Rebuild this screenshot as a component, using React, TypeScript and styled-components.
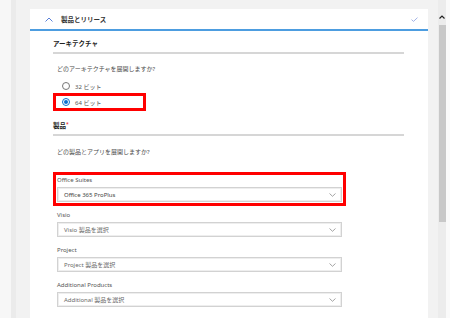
import styled, { createGlobalStyle } from "styled-components";

const GlobalStyle = createGlobalStyle`
  html, body {
    margin: 0;
    padding: 0;
    background: #f2f2f2;
    overflow: hidden;
  }
  body {
    font-family: "Noto Sans", "Noto Sans CJK JP", sans-serif;
    color: #333;
  }
`;

const fields = [
  { label: "Office Suites", value: "Office 365 ProPlus", selected: true, marked: true },
  { label: "Visio", value: "Visio 製品を選択", selected: false, marked: false },
  { label: "Project", value: "Project 製品を選択", selected: false, marked: false },
  { label: "Additional Products", value: "Additional 製品を選択", selected: false, marked: false },
];

function ChevronDown() {
  return (
    <svg width="7" height="4" viewBox="0 0 7 4">
      <path d="M0.5 0.5 L3.5 3.3 L6.5 0.5" fill="none" stroke="#9a9a9a" strokeWidth="0.9" />
    </svg>
  );
}

function App() {
  return (
    <>
      <GlobalStyle />
      <Page>
        <LeftRail />
        <Main>
          <Card>
            <Header>
              <svg width="8" height="5" viewBox="0 0 8 5">
                <path d="M0.5 4.5 L4 1 L7.5 4.5" fill="none" stroke="#5a80d8" strokeWidth="1" />
              </svg>
              <HeaderTitle>製品とリリース</HeaderTitle>
              <svg width="7" height="5" viewBox="0 0 7 5">
                <path d="M0.5 2.6 L2.5 4.4 L6.5 0.6" fill="none" stroke="#a3b3e6" strokeWidth="1" />
              </svg>
            </Header>
            <Body>
              <SectionTitle $top={8}>アーキテクチャ</SectionTitle>
              <Question $top={10}>どのアーキテクチャを展開しますか?</Question>
              <RadioGroup>
                <RadioRow>
                  <RadioCircle $checked={false} />
                  <span>32 ビット</span>
                </RadioRow>
                <RadioRow $marked>
                  <RadioCircle $checked />
                  <span>64 ビット</span>
                </RadioRow>
              </RadioGroup>
              <SectionTitle $top={13}>
                製品<Required>*</Required>
              </SectionTitle>
              <Question $top={11}>どの製品とアプリを展開しますか?</Question>
              <Fields>
                {fields.map((f) => (
                  <Field key={f.label} $marked={f.marked}>
                    <FieldLabel>{f.label}</FieldLabel>
                    <Select $selected={f.selected}>
                      <span>{f.value}</span>
                      <ChevronDown />
                    </Select>
                  </Field>
                ))}
              </Fields>
            </Body>
          </Card>
        </Main>
        <ScrollArea>
          <Gutter />
          <Track>
            <Arrow>
              <svg width="6" height="4" viewBox="0 0 6 4">
                <path d="M0.5 3.5 L3 1 L5.5 3.5" fill="none" stroke="#222" strokeWidth="1.2" />
              </svg>
            </Arrow>
            <Thumb />
          </Track>
          <Edge />
        </ScrollArea>
      </Page>
    </>
  );
}

export default App;

const Page = styled.div`
  display: flex;
  width: 450px;
  height: 318px;
`;

const LeftRail = styled.div`
  width: 11px;
  background: #f7f7f7;
  border-right: 5px solid #ebebeb;
`;

const Main = styled.div`
  width: 412px;
  padding: 9px 0 0 14px;
  box-sizing: border-box;
`;

const Card = styled.div`
  width: 398px;
  height: 100%;
  background: #fff;
  display: flex;
  flex-direction: column;
`;

const Header = styled.div`
  height: 20px;
  border-bottom: 2px solid #4d9de0;
  display: flex;
  align-items: center;
  padding: 0 10px 0 15px;
`;

const HeaderTitle = styled.div`
  flex: 1;
  margin-left: 8px;
  font-size: 6.5px;
  font-weight: bold;
  color: #333;
`;

const Body = styled.div`
  padding: 0 24px 0 23px;
  display: flex;
  flex-direction: column;
`;

const SectionTitle = styled.div<{ $top: number }>`
  margin-top: ${(p) => p.$top}px;
  font-size: 6.5px;
  line-height: 10px;
  font-weight: bold;
  color: #222;
  padding-bottom: 3px;
  border-bottom: 2px solid #d6d6d6;
`;

const Required = styled.span`
  color: #e00;
  font-weight: normal;
  vertical-align: top;
  font-size: 5px;
  line-height: 6px;
`;

const Question = styled.div<{ $top: number }>`
  margin-top: ${(p) => p.$top}px;
  padding-left: 4px;
  font-size: 6px;
  line-height: 10px;
  color: #4a4a4a;
`;

const RadioGroup = styled.div`
  margin-top: 6px;
  padding-left: 3px;
  display: flex;
  flex-direction: column;
  gap: 4px;
`;

const RadioRow = styled.div<{ $marked?: boolean }>`
  width: 87px;
  height: 12px;
  box-sizing: border-box;
  padding-left: 6px;
  display: flex;
  align-items: center;
  gap: 5px;
  font-size: 6px;
  color: #555;
  outline: ${(p) => (p.$marked ? "3px solid #f00" : "none")};
`;

const RadioCircle = styled.span<{ $checked: boolean }>`
  width: 8px;
  height: 8px;
  box-sizing: border-box;
  border-radius: 50%;
  border: 1px solid ${(p) => (p.$checked ? "#0b6fd0" : "#777")};
  display: flex;
  align-items: center;
  justify-content: center;
  &::after {
    content: "";
    width: 4px;
    height: 4px;
    border-radius: 50%;
    background: ${(p) => (p.$checked ? "#0b6fd0" : "transparent")};
  }
`;

const Fields = styled.div`
  margin-top: 19px;
  margin-left: 4px;
  width: 285px;
  display: flex;
  flex-direction: column;
  gap: 9px;
`;

const Field = styled.div<{ $marked: boolean }>`
  display: flex;
  flex-direction: column;
  gap: 2px;
  outline: ${(p) => (p.$marked ? "3px solid #f00" : "none")};
  outline-offset: 1px;
`;

const FieldLabel = styled.div`
  font-size: 6px;
  line-height: 9px;
  color: #555;
`;

const Select = styled.div<{ $selected: boolean }>`
  height: 15px;
  box-sizing: border-box;
  border: 1px solid #d2d2d2;
  box-shadow: inset 0 0 0 1px #eeeeee;
  padding: 0 5px 0 6px;
  display: flex;
  align-items: center;
  justify-content: space-between;
  font-size: 6px;
  color: ${(p) => (p.$selected ? "#444" : "#6a6a6a")};
`;

const ScrollArea = styled.div`
  display: flex;
  width: 22px;
`;

const Gutter = styled.div`
  width: 10px;
  background: #f2f2f2;
`;

const Track = styled.div`
  width: 8px;
  background: #ececec;
  display: flex;
  flex-direction: column;
  align-items: center;
  padding-top: 15px;
`;

const Arrow = styled.div`
  height: 10px;
  display: flex;
  justify-content: center;
`;

const Thumb = styled.div`
  width: 7px;
  height: 197px;
  background: #c8c8c8;
`;

const Edge = styled.div`
  width: 4px;
  background: #fafafa;
`;
